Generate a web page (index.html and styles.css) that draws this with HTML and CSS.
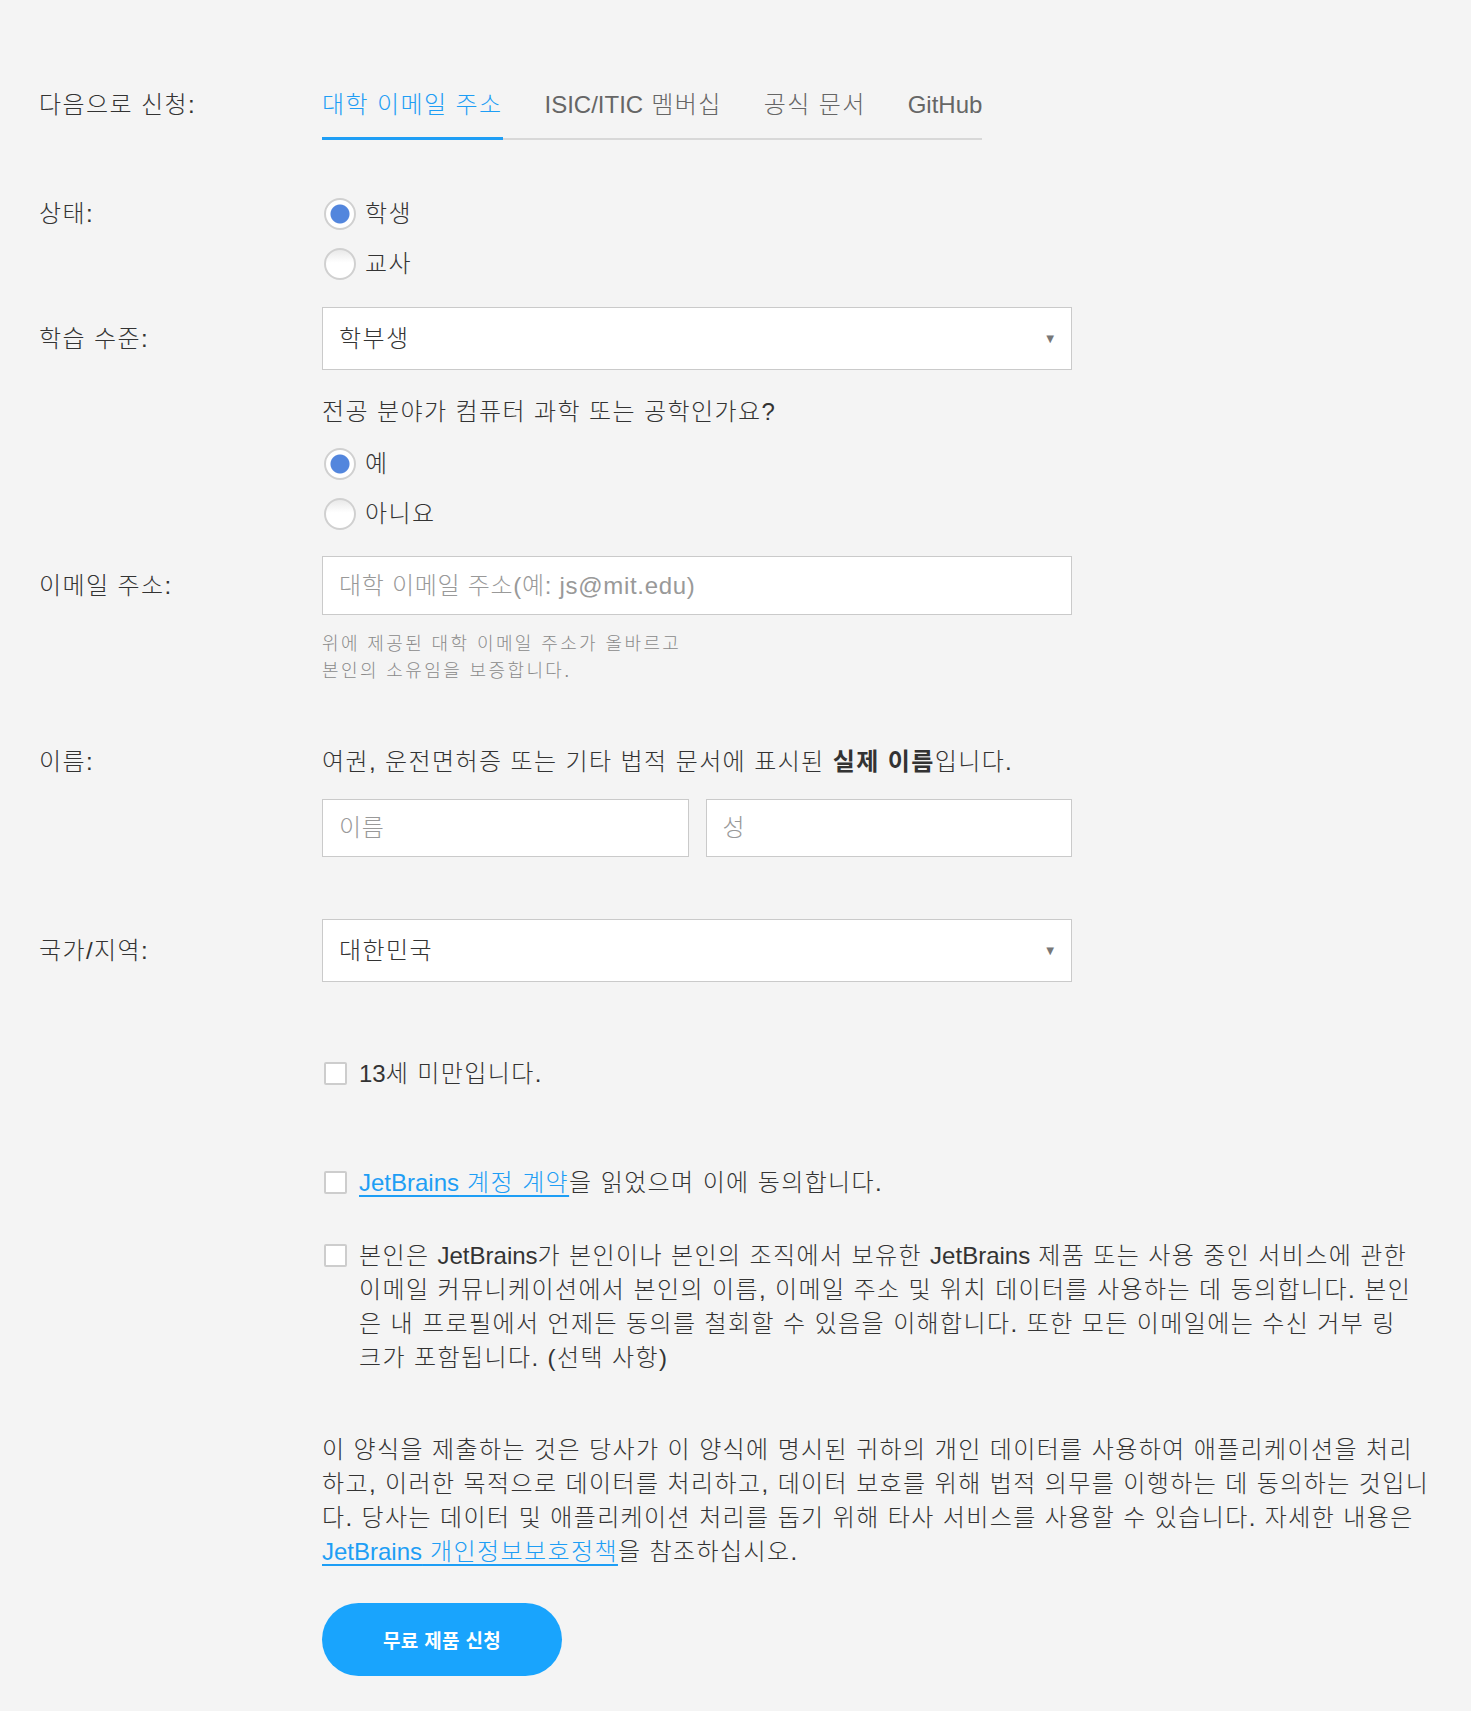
FILE: index.html
```html
<!doctype html>
<html lang="ko">

<head>
    <meta charset="UTF-8" />
    <meta name="viewport" content="width=device-width, initial-scale=1.0" />
    <title>무료 제품 신청</title>
    <link rel="stylesheet" href="styles.css">
</head>

<body>
    <form class="apply-form" action="#" method="POST">
        <div class="row">
            <div class="label">다음으로 신청:</div>
            <div class="field">
                <nav class="tabs">
                    <a href="#" class="tab active">대학 이메일 주소</a>
                    <a href="#" class="tab"><span class="latin">ISIC/ITIC</span> 멤버십</a>
                    <a href="#" class="tab">공식 문서</a>
                    <a href="#" class="tab latin">GitHub</a>
                </nav>
            </div>
        </div>

        <div class="row row-status">
            <div class="label label-radio">상태:</div>
            <div class="field">
                <label class="option">
                    <input type="radio" class="radio" name="status" checked>
                    <span>학생</span>
                </label>
                <label class="option">
                    <input type="radio" class="radio" name="status">
                    <span>교사</span>
                </label>
            </div>
        </div>

        <div class="row row-level">
            <div class="label label-select">학습 수준:</div>
            <div class="field">
                <div class="select">
                    <span>학부생</span>
                    <span class="select-arrow">&#9660;</span>
                </div>
            </div>
        </div>

        <div class="row row-major">
            <div class="label"></div>
            <div class="field">
                <p class="question">전공 분야가 컴퓨터 과학 또는 공학인가요?</p>
                <div class="options">
                    <label class="option">
                        <input type="radio" class="radio" name="major" checked>
                        <span>예</span>
                    </label>
                    <label class="option">
                        <input type="radio" class="radio" name="major">
                        <span>아니요</span>
                    </label>
                </div>
            </div>
        </div>

        <div class="row row-email">
            <div class="label label-input">이메일 주소:</div>
            <div class="field">
                <input type="email" class="text-input" placeholder="대학 이메일 주소(예: js@mit.edu)">
                <p class="hint">위에 제공된 대학 이메일 주소가 올바르고<br>본인의 소유임을 보증합니다.</p>
            </div>
        </div>

        <div class="row row-name">
            <div class="label">이름:</div>
            <div class="field">
                <p>여권, 운전면허증 또는 기타 법적 문서에 표시된 <strong>실제 이름</strong>입니다.</p>
                <div class="name-inputs">
                    <input type="text" class="text-input" placeholder="이름">
                    <input type="text" class="text-input" placeholder="성">
                </div>
            </div>
        </div>

        <div class="row row-country">
            <div class="label label-select">국가/지역:</div>
            <div class="field">
                <div class="select">
                    <span>대한민국</span>
                    <span class="select-arrow">&#9660;</span>
                </div>
            </div>
        </div>

        <div class="row row-check">
            <div class="label"></div>
            <div class="field">
                <label class="check">
                    <input type="checkbox" class="checkbox">
                    <span><span class="latin">13</span>세 미만입니다.</span>
                </label>
            </div>
        </div>

        <div class="row row-check">
            <div class="label"></div>
            <div class="field">
                <label class="check">
                    <input type="checkbox" class="checkbox">
                    <span><a href="#"><span class="latin">JetBrains</span> 계정 계약</a>을 읽었으며 이에 동의합니다.</span>
                </label>
            </div>
        </div>

        <div class="row row-consent">
            <div class="label"></div>
            <div class="field">
                <label class="check">
                    <input type="checkbox" class="checkbox">
                    <span>본인은 <span class="latin">JetBrains</span>가 본인이나 본인의 조직에서 보유한 <span class="latin">JetBrains</span> 제품 또는 사용 중인 서비스에 관한 이메일 커뮤니케이션에서 본인의 이름, 이메일 주소 및 위치 데이터를 사용하는 데 동의합니다. 본인은 내 프로필에서 언제든 동의를 철회할 수 있음을 이해합니다. 또한 모든 이메일에는 수신 거부 링크가 포함됩니다. (선택 사항)</span>
                </label>
            </div>
        </div>

        <div class="row row-notice">
            <div class="label"></div>
            <div class="field">
                <p>이 양식을 제출하는 것은 당사가 이 양식에 명시된 귀하의 개인 데이터를 사용하여 애플리케이션을 처리하고, 이러한 목적으로 데이터를 처리하고, 데이터 보호를 위해 법적 의무를 이행하는 데 동의하는 것입니다. 당사는 데이터 및 애플리케이션 처리를 돕기 위해 타사 서비스를 사용할 수 있습니다. 자세한 내용은 <a href="#"><span class="latin">JetBrains</span> 개인정보보호정책</a>을 참조하십시오.</p>
                <button type="submit" class="btn-submit">무료 제품 신청</button>
            </div>
        </div>
    </form>
</body>

</html>
```

FILE: styles.css
```css
:root {
    --bg: #f4f4f4;
    --text: #333;
    --muted: #8a8a8a;
    --accent: #1e9ef5;
    --button: #19a4fd;
    --border: #cacaca;
}

* {
    box-sizing: border-box;
    margin: 0;
    padding: 0;
}

body {
    background-color: var(--bg);
    color: var(--text);
    font-family: "Liberation Sans", "Noto Sans CJK KR", sans-serif;
    font-size: 24px;
    font-weight: 300;
    line-height: 34px;
    letter-spacing: 1.4px;
}

/* latin words keep their natural spacing, only hangul is spread */
.latin {
    letter-spacing: 0;
}

a {
    color: var(--accent);
    text-decoration: underline;
    text-underline-offset: 4px;
}

strong {
    font-weight: 700;
}

.apply-form {
    padding: 88px 40px 36px 39px;
}

.row {
    display: grid;
    grid-template-columns: 283px 1fr;
}

.label {
    line-height: 34px;
}

/* tabs */
.tabs {
    display: inline-flex;
    gap: 42px;
    box-shadow: inset 0 -2px 0 #d8d8d8;
}

.tab {
    color: #666;
    text-decoration: none;
    line-height: 34px;
    padding-bottom: 15px;
    border-bottom: 3px solid transparent;
}

.tab.active {
    color: var(--accent);
    border-bottom-color: var(--accent);
}

/* radios */
.row-status {
    margin-top: 49px;
}

.label-radio {
    line-height: 50px;
}

.option {
    display: flex;
    align-items: center;
    gap: 9px;
    height: 50px;
}

.radio {
    appearance: none;
    width: 32px;
    height: 32px;
    margin-left: 2px;
    border: 2px solid #d0d0d0;
    border-radius: 50%;
    background: linear-gradient(#e9e9e9, #fff 45%);
}

.radio:checked {
    background: radial-gradient(circle, #5386dd 0 9px, #fff 10px);
}

/* selects and inputs */
.row-level {
    margin-top: 18px;
}

.label-select {
    line-height: 63px;
}

.select {
    width: 750px;
    height: 63px;
    display: flex;
    align-items: center;
    justify-content: space-between;
    padding: 0 13px 0 16px;
    background-color: #fff;
    border: 1px solid var(--border);
}

.select-arrow {
    font-size: 13px;
    color: #777;
}

.row-major .question {
    margin-top: 25px;
}

.options {
    margin-top: 10px;
}

.row-email {
    margin-top: 17px;
}

.label-input {
    line-height: 59px;
}

.text-input {
    display: block;
    width: 750px;
    height: 59px;
    padding: 0 16px;
    background-color: #fff;
    border: 1px solid var(--border);
    font-family: inherit;
    font-size: 24px;
    font-weight: 300;
    letter-spacing: 0.7px;
    color: var(--text);
}

.text-input::placeholder {
    color: #999;
}

.hint {
    margin-top: 16px;
    font-size: 18px;
    line-height: 27px;
    letter-spacing: 2.4px;
    color: var(--muted);
}

.row-name {
    margin-top: 60px;
}

.name-inputs {
    display: flex;
    gap: 17px;
    width: 750px;
    margin-top: 20px;
}

.name-inputs .text-input {
    flex: 1;
    width: auto;
    min-width: 0;
    height: 58px;
}

.row-country {
    margin-top: 62px;
}

/* checkboxes */
.row-check {
    margin-top: 75px;
}

.row-consent {
    margin-top: 39px;
}

.check {
    display: flex;
    align-items: flex-start;
    gap: 12px;
    padding-right: 17px;
}

.checkbox {
    appearance: none;
    flex: none;
    width: 23px;
    height: 23px;
    margin: 5px 0 0 2px;
    background-color: #fff;
    border: 2px solid #cdcdcd;
    border-radius: 2px;
}

.row-notice {
    margin-top: 58px;
}

.btn-submit {
    display: block;
    width: 240px;
    height: 73px;
    margin-top: 34px;
    border: none;
    border-radius: 37px;
    background-color: var(--button);
    color: #fff;
    font-family: "Noto Sans CJK KR", sans-serif;
    font-size: 19px;
    font-weight: 700;
    letter-spacing: 0.3px;
    cursor: pointer;
}
```
